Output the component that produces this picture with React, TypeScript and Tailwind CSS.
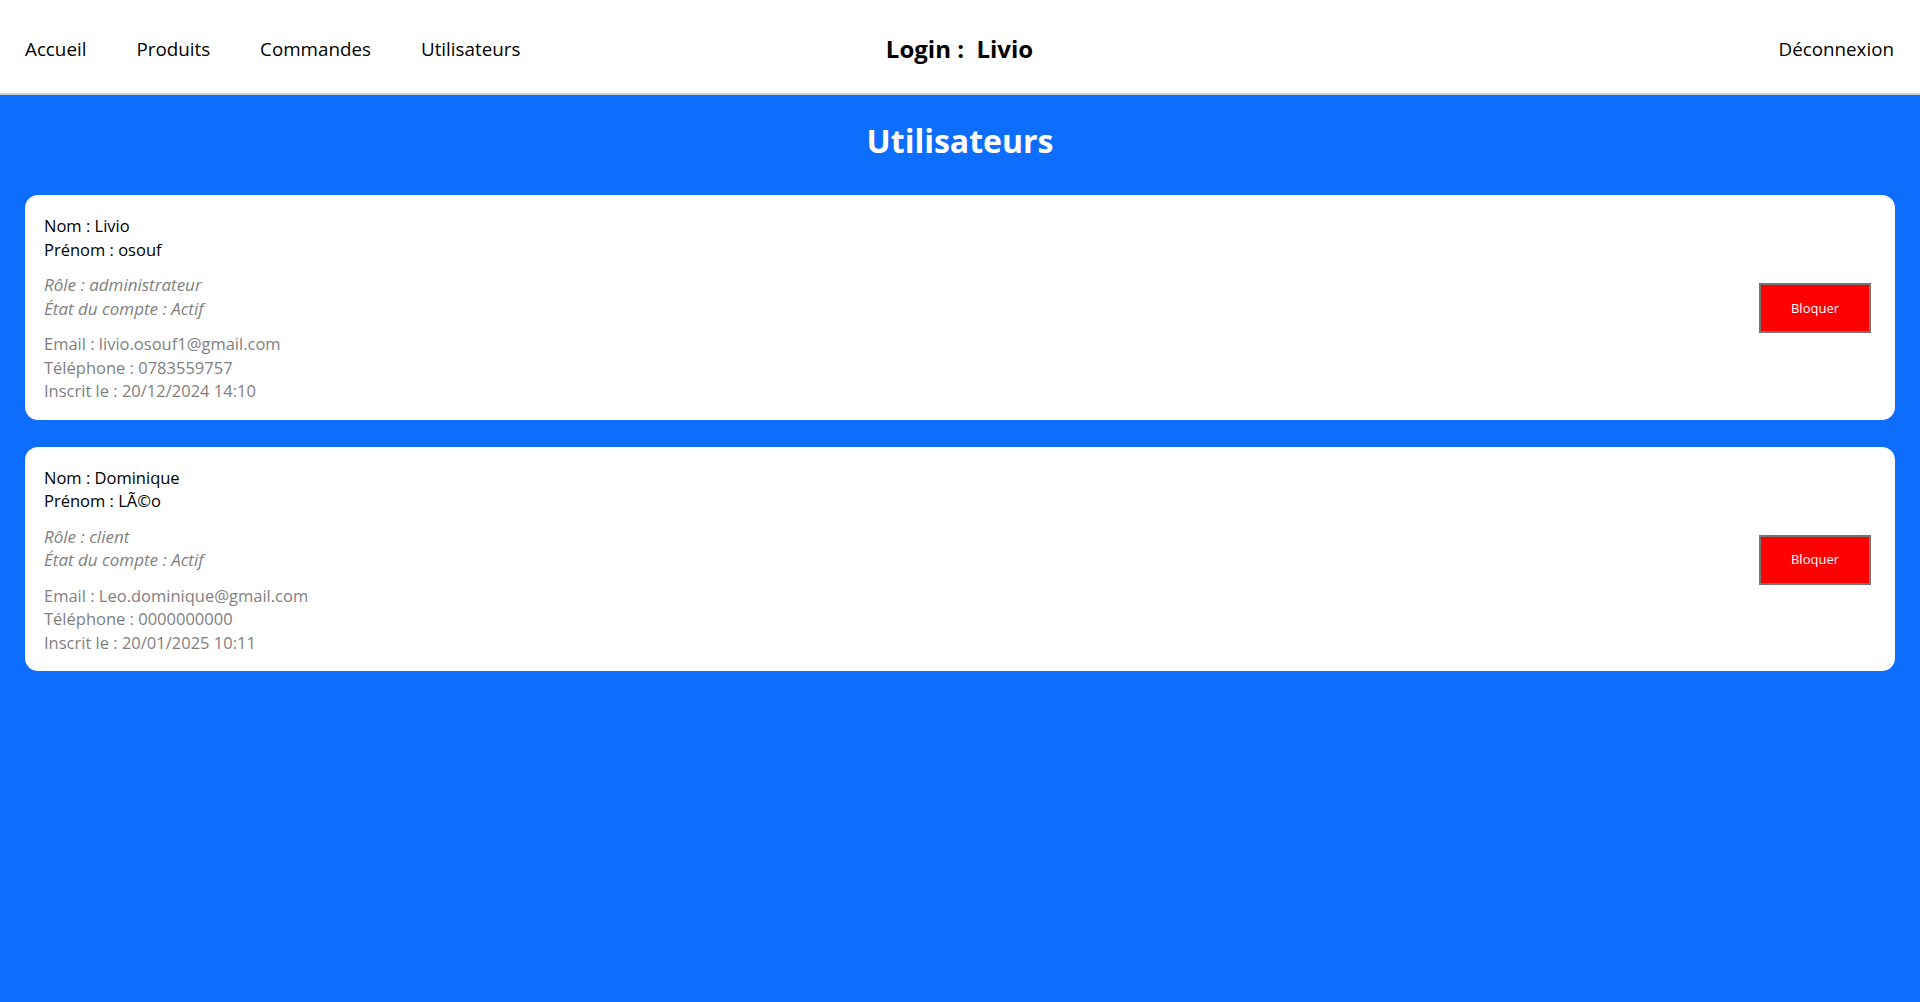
import React from "react";

interface User {
  nom: string;
  prenom: string;
  role: string;
  etat: string;
  email: string;
  telephone: string;
  inscrit: string;
}

const users: User[] = [
  {
    nom: "Livio",
    prenom: "osouf",
    role: "administrateur",
    etat: "Actif",
    email: "livio.osouf1@gmail.com",
    telephone: "0783559757",
    inscrit: "20/12/2024 14:10",
  },
  {
    nom: "Dominique",
    prenom: "LÃ©o",
    role: "client",
    etat: "Actif",
    email: "Leo.dominique@gmail.com",
    telephone: "0000000000",
    inscrit: "20/01/2025 10:11",
  },
];

function UserCard({ user }: { user: User }) {
  return (
    <div className="flex items-center justify-between rounded-[13px] bg-white pt-[19px] pb-[17px] pl-[19px] pr-[24px]">
      <div className="text-[16.5px] leading-[23.5px]">
        <div className="text-black">
          <p>Nom : {user.nom}</p>
          <p>Prénom : {user.prenom}</p>
        </div>
        <div className="mt-[12px] text-[17px] italic text-[#7f7f7f]">
          <p>Rôle : {user.role}</p>
          <p>État du compte : {user.etat}</p>
        </div>
        <div className="mt-[12px] text-[#7f7f7f]">
          <p>Email : {user.email}</p>
          <p>Téléphone : {user.telephone}</p>
          <p>Inscrit le : {user.inscrit}</p>
        </div>
      </div>
      <button className="h-[50px] w-[112px] border-2 border-[#767676] bg-[#ff0000] text-[13px] text-white">
        Bloquer
      </button>
    </div>
  );
}

export default function App() {
  return (
    <div className="min-h-screen bg-[#0d6efd] font-['Open_Sans',sans-serif]">
      <header className="grid h-[95px] grid-cols-[1fr_auto_1fr] items-center border-b-2 border-[#cfcfcf] bg-white pl-[25px] pr-[26px] pt-[5px]">
        <nav className="flex gap-[50px] text-[18.8px] text-black">
          <a>Accueil</a>
          <a>Produits</a>
          <a>Commandes</a>
          <a>Utilisateurs</a>
        </nav>
        <div className="text-[24px] font-bold text-black">{"Login :\u00a0 Livio"}</div>
        <div className="flex justify-end text-[18.8px] text-black">
          <a>Déconnexion</a>
        </div>
      </header>

      <main className="px-[25px] pt-[26px] pb-10">
        <h1 className="text-center text-[32px] font-bold leading-[40px] text-white">Utilisateurs</h1>
        <div className="mt-[34px] flex flex-col gap-[27px]">
          {users.map((u) => (
            <UserCard key={u.email} user={u} />
          ))}
        </div>
      </main>
    </div>
  );
}
